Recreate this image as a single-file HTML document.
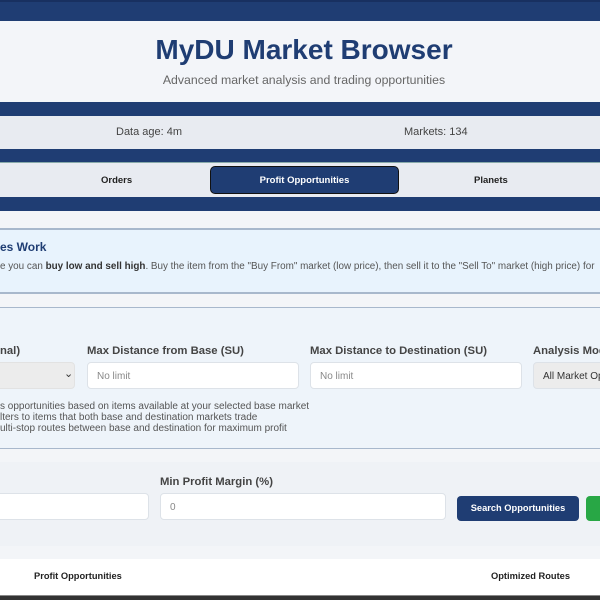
<html><head><style>
*{margin:0;padding:0;box-sizing:border-box}
body{width:600px;height:600px;overflow:hidden;background:#f3f5f8;font-family:"Liberation Sans",sans-serif;position:relative}
div{position:absolute}
.nav{left:0;width:600px;background:#1f3d73}
.t{white-space:nowrap}
.lbl{font-size:11.3px;font-weight:bold;color:#444;top:345px}
.inp{top:362px;height:27px;border:1px solid #dde2e8;border-radius:4px;background:#fff;font-size:10px;color:#888;padding:8px 0 0 9px}
</style></head><body>
<div class="nav" style="top:0;height:21px;border-top:2px solid #183060"></div>
<div style="top:21px;left:0;width:600px;height:81px;background:#f3f5f9"></div>
<div class="t" style="top:34px;left:0;width:608px;text-align:center;font-size:28px;font-weight:bold;color:#1f3d73">MyDU Market Browser</div>
<div class="t" style="top:73px;left:0;width:608px;text-align:center;font-size:12.3px;color:#666">Advanced market analysis and trading opportunities</div>
<div class="nav" style="top:102px;height:14px"></div>
<div style="top:116px;left:0;width:600px;height:33px;background:#e8ebf1"></div>
<div class="t" style="top:126px;left:116px;font-size:11px;color:#444">Data age: 4m</div>
<div class="t" style="top:126px;left:404px;font-size:11px;color:#444">Markets: 134</div>
<div class="nav" style="top:149px;height:14px;border-bottom:1px solid #8aa"></div>
<div style="top:163px;left:0;width:600px;height:34px;background:#e8ebf1"></div>
<div class="t" style="top:175px;left:101px;font-size:9.5px;font-weight:bold;color:#222">Orders</div>
<div style="top:166px;left:210px;width:189px;height:28px;background:#1f3d73;border:1px solid #111;border-radius:5px;color:#fff;font-size:9.5px;font-weight:bold;text-align:center;line-height:27px">Profit Opportunities</div>
<div class="t" style="top:175px;left:474px;font-size:9.5px;font-weight:bold;color:#222">Planets</div>
<div class="nav" style="top:197px;height:14px"></div>
<div style="top:228px;left:0;width:600px;height:66px;background:#e8f3fd;border-top:2px solid #a8b8cc;border-bottom:2px solid #a8b8cc"></div>
<div class="t" style="top:240px;left:0;font-size:12px;font-weight:bold;color:#1f3d73">es Work</div>
<div class="t" style="top:261px;left:0;font-size:9.9px;color:#555">e you can <b style="color:#333">buy low and sell high</b>. Buy the item from the "Buy From" market (low price), then sell it to the "Sell To" market (high price) for</div>
<div style="top:307px;left:0;width:600px;height:142px;background:#eef4fa;border-top:1px solid #a8b8cc;border-bottom:1px solid #a8b8cc"></div>
<div class="t lbl" style="left:0">nal)</div>
<div class="t lbl" style="left:87px">Max Distance from Base (SU)</div>
<div class="t lbl" style="left:310px">Max Distance to Destination (SU)</div>
<div class="t lbl" style="left:533px">Analysis Mode</div>
<div class="inp" style="left:-5px;width:80px;background:#ececec;border-color:#e2e2e2;color:#333;font-size:11px;padding:4px 0 0 68px">⌄</div>
<div class="inp" style="left:87px;width:212px">No limit</div>
<div class="inp" style="left:310px;width:212px">No limit</div>
<div class="inp" style="left:533px;width:80px;background:#ececec;color:#333">All Market Op</div>
<div class="t" style="top:401px;left:0;font-size:10px;color:#555;line-height:11.2px">s opportunities based on items available at your selected base market<br>lters to items that both base and destination markets trade<br>ulti-stop routes between base and destination for maximum profit</div>
<div style="top:462px;left:0;width:600px;height:84px;background:#eff2f6"></div>
<div class="t" style="top:476px;left:160px;font-size:11.3px;font-weight:bold;color:#444">Min Profit Margin (%)</div>
<div class="inp" style="top:493px;left:-5px;width:154px;height:27px"></div>
<div class="inp" style="top:493px;left:160px;width:286px;height:27px">0</div>
<div style="top:496px;left:457px;width:122px;height:25px;background:#1f3d73;border-radius:4px;color:#fff;font-size:9.3px;font-weight:bold;text-align:center;line-height:25px">Search Opportunities</div>
<div style="top:496px;left:586px;width:30px;height:25px;background:#28a745;border-radius:4px"></div>
<div style="top:559px;left:0;width:600px;height:36px;background:#fff"></div>
<div class="t" style="top:571px;left:34px;font-size:9.3px;font-weight:bold;color:#222">Profit Opportunities</div>
<div class="t" style="top:571px;left:491px;font-size:9.3px;font-weight:bold;color:#222">Optimized Routes</div>
<div style="top:595px;left:0;width:600px;height:5px;background:#333;border-top:1px solid #888"></div>
</body></html>
